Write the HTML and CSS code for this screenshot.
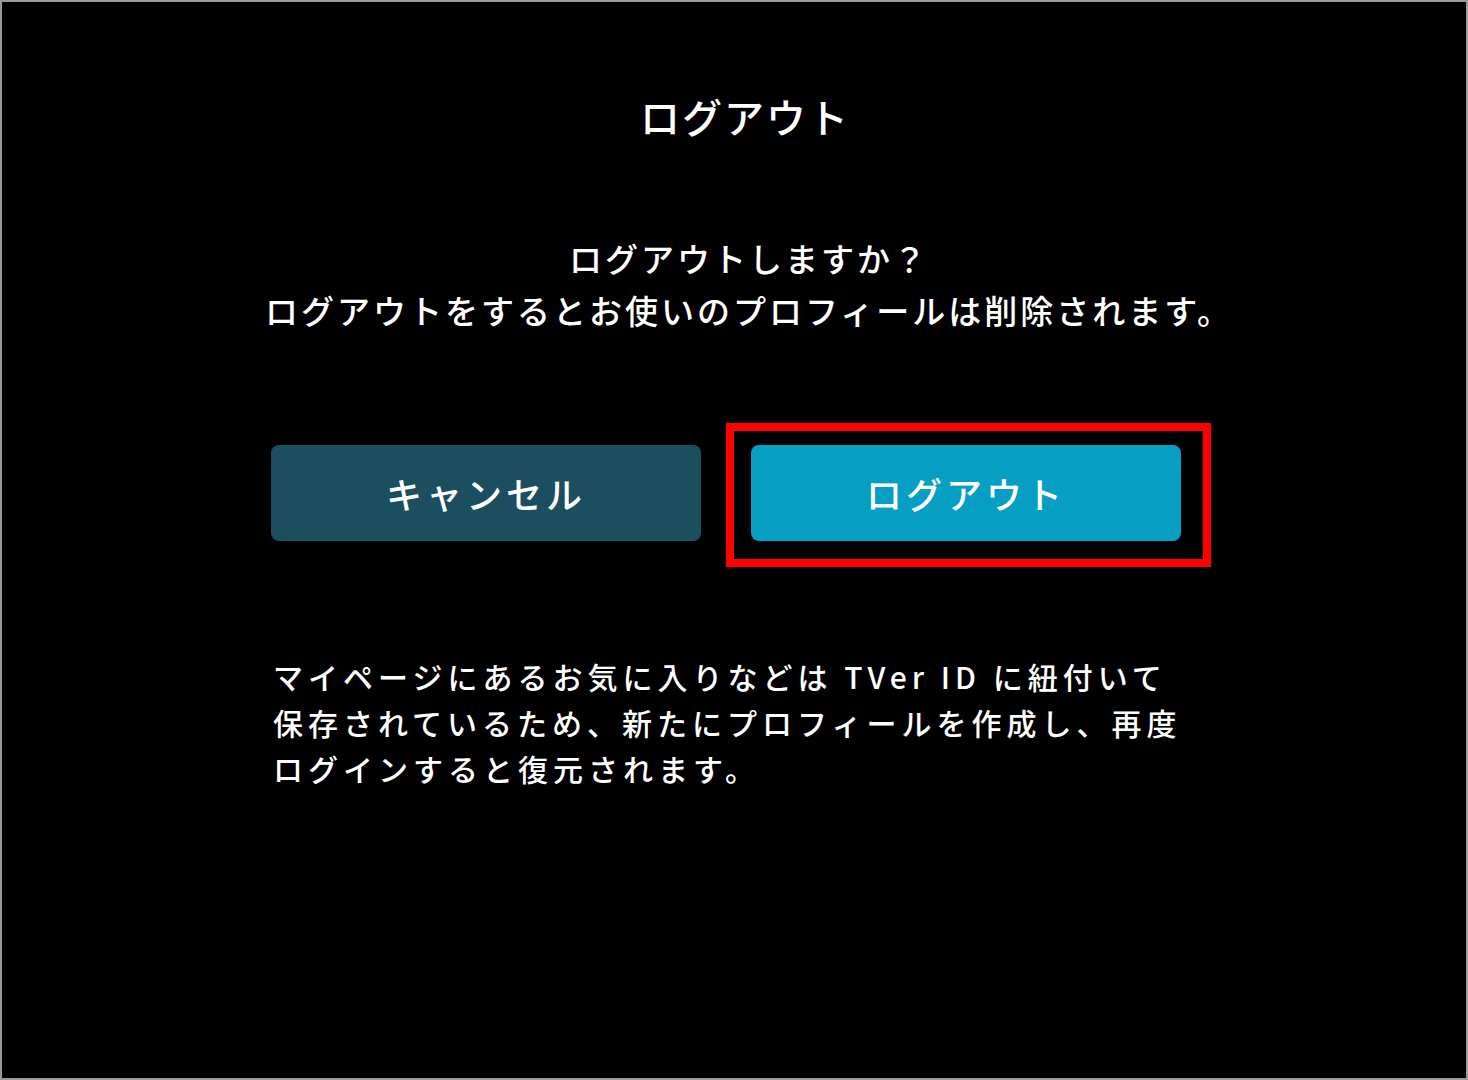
FILE: index.html
```html
<!DOCTYPE html>
<html lang="ja">
<head>
<meta charset="utf-8">
<title>ログアウト</title>
<link rel="stylesheet" href="styles.css">
</head>
<body>
<div class="frame">
  <h1 class="title">ログアウト</h1>
  <p class="message">ログアウトしますか？<br>ログアウトをするとお使いのプロフィールは削除されます。</p>
  <div class="actions">
    <button class="btn btn-cancel">キャンセル</button>
    <div class="focus-wrap">
      <button class="btn btn-logout">ログアウト</button>
      <span class="highlight"></span>
    </div>
  </div>
  <p class="note">マイページにあるお気に入りなどは TVer ID に紐付いて<br>保存されているため、新たにプロフィールを作成し、再度<br>ログインすると復元されます。</p>
</div>
</body>
</html>
```

FILE: styles.css
```css
html, body {
  margin: 0;
  padding: 0;
  background: #000;
}

body {
  font-family: "Noto Sans CJK JP", "Noto Sans", sans-serif;
  color: #fff;
}

.frame {
  box-sizing: border-box;
  width: 1468px;
  height: 1080px;
  border: 2px solid #999;
  background: #000;
  padding-top: 88px;
}

.title {
  margin: 0;
  font-size: 40px;
  font-weight: 500;
  line-height: 52px;
  letter-spacing: 2px;
  text-align: center;
  padding-left: 22px;
}

.message {
  margin: 90px 0 0;
  font-size: 33px;
  font-weight: 500;
  line-height: 52px;
  letter-spacing: 3px;
  text-align: center;
  padding-left: 30px;
}

.actions {
  display: flex;
  gap: 50px;
  margin-top: 109px;
  padding-left: 269px;
}

.btn {
  width: 430px;
  height: 96px;
  border: none;
  border-radius: 8px;
  color: #fff;
  font-family: inherit;
  font-size: 36px;
  font-weight: 500;
  letter-spacing: 4px;
  padding: 0;
}

.btn-cancel {
  background: #1b4f5f;
}

.btn-logout {
  background: #069ec3;
}

.focus-wrap {
  position: relative;
  display: flex;
}

.highlight {
  position: absolute;
  left: -25px;
  top: -22px;
  width: 485px;
  height: 144px;
  box-sizing: border-box;
  border: 8px solid #ff0000;
  pointer-events: none;
}

.note {
  margin: 112px 0 0;
  padding-left: 271px;
  font-size: 30px;
  font-weight: 500;
  line-height: 46px;
  letter-spacing: 5px;
}
```
